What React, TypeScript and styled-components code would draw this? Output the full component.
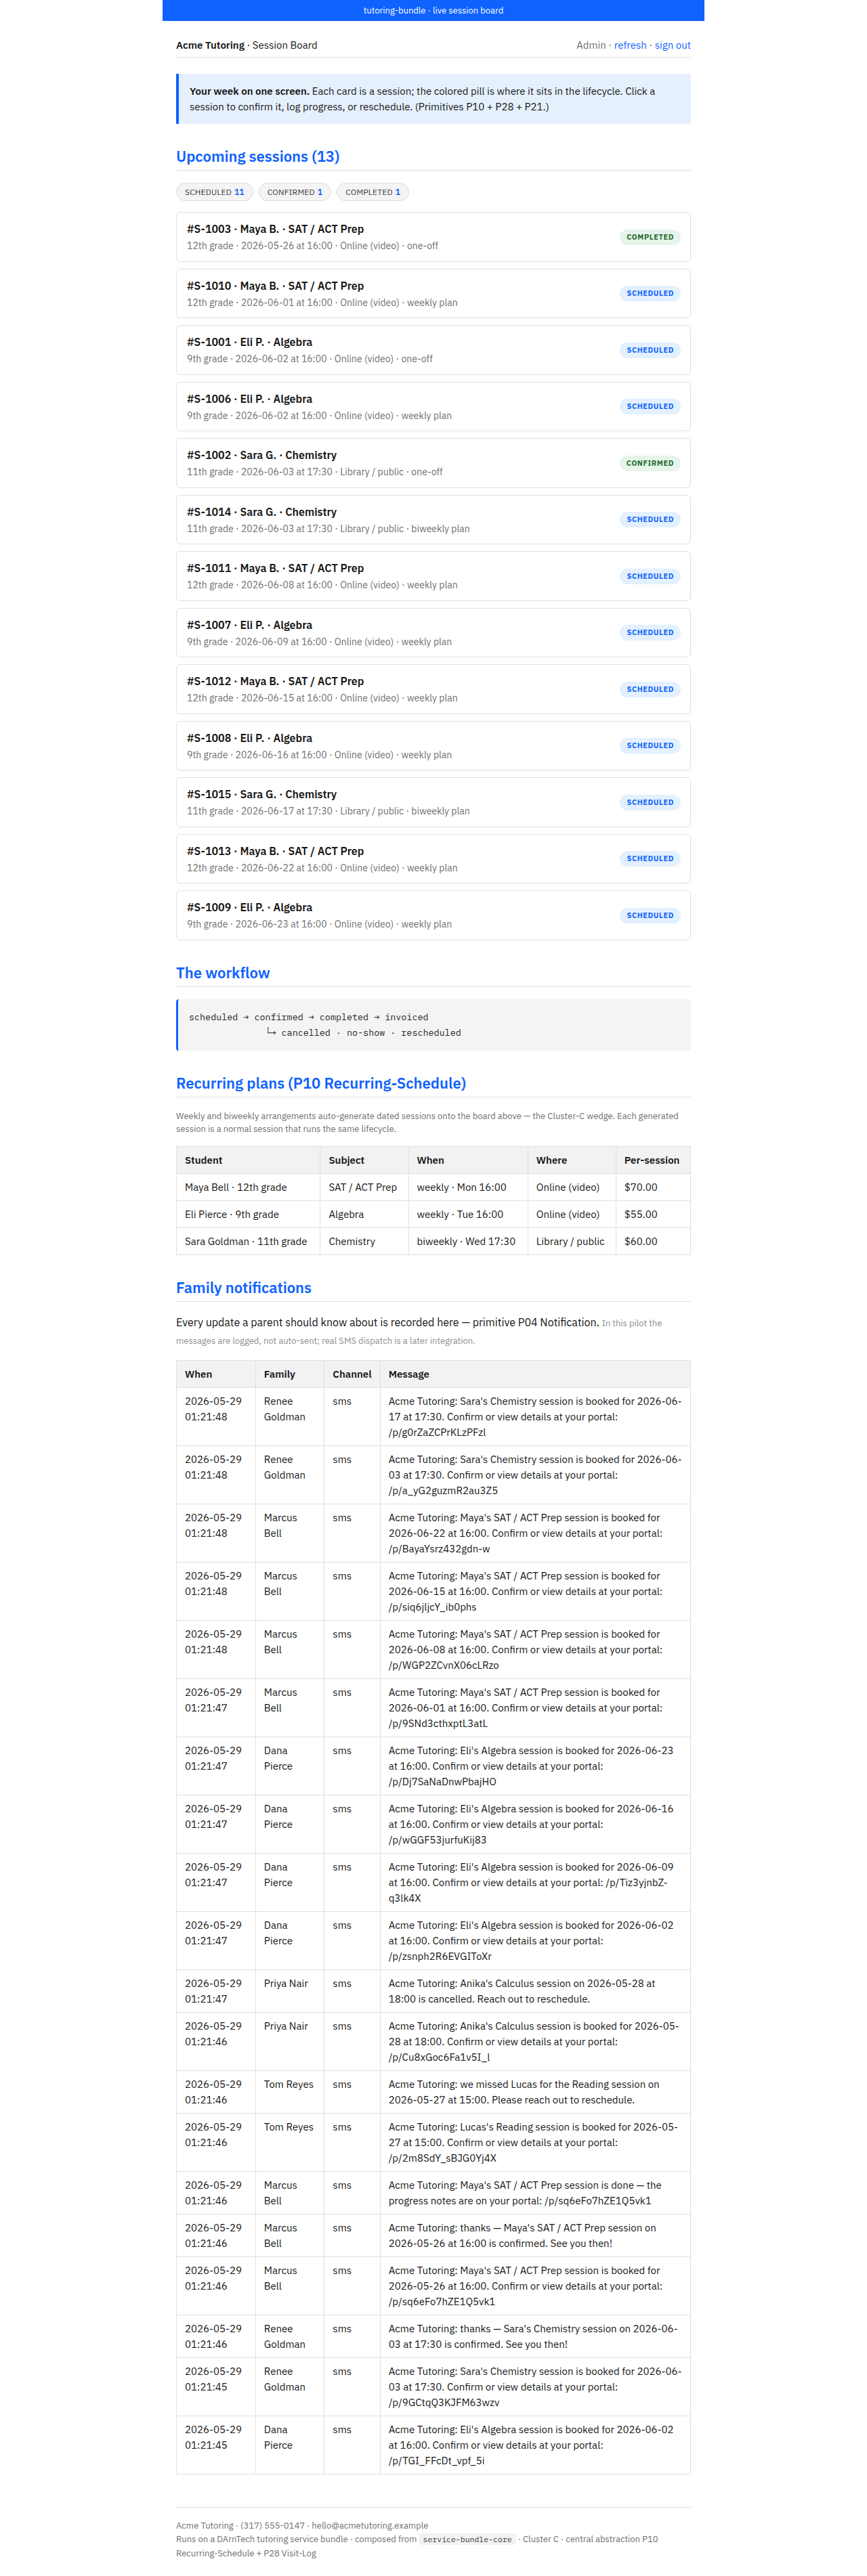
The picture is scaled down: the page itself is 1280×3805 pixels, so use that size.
import React from "react";
import styled, { createGlobalStyle } from "styled-components";

const GlobalStyle = createGlobalStyle`
  html, body { margin: 0; padding: 0; background: #ffffff; }
  body {
    font-family: "IBM Plex Sans", "Noto Sans", "Liberation Sans", sans-serif;
    color: #161616;
    font-size: 15px;
    line-height: 23px;
  }
  * { box-sizing: border-box; }
`;

const BLUE = "#0f62fe";

const Page = styled.div`
  max-width: 800px;
  margin: 0 auto;
`;

const Banner = styled.div`
  background: ${BLUE};
  color: #ffffff;
  text-align: center;
  font-size: 13px;
  height: 31px;
  line-height: 31px;
`;

const Main = styled.main`
  padding: 0 20px 17px;
`;

const TopBar = styled.header`
  display: flex;
  justify-content: space-between;
  align-items: baseline;
  padding: 24px 0 6px;
  border-bottom: 1px solid #e0e0e0;
  font-size: 15px;
`;

const Brand = styled.div`
  color: #161616;
  strong { font-weight: 600; }
`;

const Muted = styled.span`
  color: #6f6f6f;
`;

const NavLink = styled.a`
  color: ${BLUE};
  text-decoration: none;
`;

const Intro = styled.div`
  margin-top: 24px;
  background: #e5f0fc;
  border-left: 4px solid ${BLUE};
  padding: 14px 16px;
  font-size: 15px;
  line-height: 23px;
  strong { font-weight: 600; }
`;

const SectionTitle = styled.h2`
  margin: 34px 0 18px;
  padding-bottom: 6px;
  border-bottom: 1px solid #e0e0e0;
  color: ${BLUE};
  font-size: 22px;
  line-height: 28px;
  font-weight: 600;
`;

const ChipRow = styled.div`
  display: flex;
  gap: 8px;
  margin-bottom: 16px;
`;

const Chip = styled.span`
  display: inline-flex;
  align-items: center;
  gap: 4px;
  height: 27px;
  padding: 0 12px;
  border: 1px solid #dcdcdc;
  border-radius: 14px;
  background: #f4f4f4;
  font-size: 12px;
  letter-spacing: 0.2px;
  color: #393939;
  b { color: ${BLUE}; font-weight: 600; }
`;

const CardList = styled.div`
  display: flex;
  flex-direction: column;
  gap: 10px;
`;

const Card = styled.div`
  display: flex;
  align-items: center;
  justify-content: space-between;
  border: 1px solid #e0e0e0;
  border-radius: 6px;
  padding: 13px 14px 12.5px 15px;
  background: #ffffff;
`;

const CardTitle = styled.div`
  font-size: 16px;
  line-height: 22px;
  font-weight: 600;
`;

const CardMeta = styled.div`
  margin-top: 4px;
  font-size: 14px;
  line-height: 20px;
  color: #6f6f6f;
`;

type Status = "scheduled" | "confirmed" | "completed";

const pillColors: Record<Status, { bg: string; fg: string }> = {
  scheduled: { bg: "#e3f0fd", fg: BLUE },
  confirmed: { bg: "#e6f4e9", fg: "#1e6b32" },
  completed: { bg: "#e6f4e9", fg: "#1e6b32" },
};

const Pill = styled.span<{ $status: Status }>`
  display: inline-block;
  padding: 0 10px;
  height: 23px;
  line-height: 23px;
  border-radius: 12px;
  font-size: 11px;
  font-weight: 700;
  letter-spacing: 0.6px;
  text-transform: uppercase;
  background: ${(p) => pillColors[p.$status].bg};
  color: ${(p) => pillColors[p.$status].fg};
`;

const Flow = styled.pre`
  margin: 0;
  background: #f4f4f4;
  border-left: 3px solid ${BLUE};
  border-radius: 4px;
  padding: 15px 16px;
  font-family: "IBM Plex Mono", "DejaVu Sans Mono", "Liberation Mono", monospace;
  font-size: 13.4px;
  line-height: 23px;
  color: #262626;
`;

const Note = styled.p`
  margin: 0 0 16px;
  font-size: 13px;
  line-height: 19px;
  color: #6f6f6f;
`;

const Lead = styled.p`
  margin: 0 0 16px;
  font-size: 16px;
  line-height: 24px;
`;

const Small = styled.span`
  font-size: 13px;
  color: #8d8d8d;
`;

const Table = styled.table`
  width: 100%;
  border-collapse: collapse;
  font-size: 15px;
  line-height: 23px;
  th, td {
    border: 1px solid #e0e0e0;
    padding: 8px 12px;
    text-align: left;
    vertical-align: top;
  }
  th {
    background: #f2f2f2;
    font-weight: 600;
  }
`;

const Footer = styled.footer`
  margin-top: 48px;
  border-top: 1px solid #e0e0e0;
  padding-top: 17px;
  font-size: 13px;
  line-height: 20.5px;
  color: #6f6f6f;
`;

const Code = styled.code`
  font-family: "IBM Plex Mono", "DejaVu Sans Mono", "Liberation Mono", monospace;
  font-size: 11.5px;
  line-height: 16px;
  background: #f2f2f2;
  border-radius: 3px;
  padding: 1px 6px;
  color: #393939;
`;

type Session = {
  id: string;
  who: string;
  subject: string;
  grade: string;
  date: string;
  time: string;
  where: string;
  plan: string;
  status: Status;
};

const sessions: Session[] = [
  { id: "S-1003", who: "Maya B.", subject: "SAT / ACT Prep", grade: "12th grade", date: "2026-05-26", time: "16:00", where: "Online (video)", plan: "one-off", status: "completed" },
  { id: "S-1010", who: "Maya B.", subject: "SAT / ACT Prep", grade: "12th grade", date: "2026-06-01", time: "16:00", where: "Online (video)", plan: "weekly plan", status: "scheduled" },
  { id: "S-1001", who: "Eli P.", subject: "Algebra", grade: "9th grade", date: "2026-06-02", time: "16:00", where: "Online (video)", plan: "one-off", status: "scheduled" },
  { id: "S-1006", who: "Eli P.", subject: "Algebra", grade: "9th grade", date: "2026-06-02", time: "16:00", where: "Online (video)", plan: "weekly plan", status: "scheduled" },
  { id: "S-1002", who: "Sara G.", subject: "Chemistry", grade: "11th grade", date: "2026-06-03", time: "17:30", where: "Library / public", plan: "one-off", status: "confirmed" },
  { id: "S-1014", who: "Sara G.", subject: "Chemistry", grade: "11th grade", date: "2026-06-03", time: "17:30", where: "Library / public", plan: "biweekly plan", status: "scheduled" },
  { id: "S-1011", who: "Maya B.", subject: "SAT / ACT Prep", grade: "12th grade", date: "2026-06-08", time: "16:00", where: "Online (video)", plan: "weekly plan", status: "scheduled" },
  { id: "S-1007", who: "Eli P.", subject: "Algebra", grade: "9th grade", date: "2026-06-09", time: "16:00", where: "Online (video)", plan: "weekly plan", status: "scheduled" },
  { id: "S-1012", who: "Maya B.", subject: "SAT / ACT Prep", grade: "12th grade", date: "2026-06-15", time: "16:00", where: "Online (video)", plan: "weekly plan", status: "scheduled" },
  { id: "S-1008", who: "Eli P.", subject: "Algebra", grade: "9th grade", date: "2026-06-16", time: "16:00", where: "Online (video)", plan: "weekly plan", status: "scheduled" },
  { id: "S-1015", who: "Sara G.", subject: "Chemistry", grade: "11th grade", date: "2026-06-17", time: "17:30", where: "Library / public", plan: "biweekly plan", status: "scheduled" },
  { id: "S-1013", who: "Maya B.", subject: "SAT / ACT Prep", grade: "12th grade", date: "2026-06-22", time: "16:00", where: "Online (video)", plan: "weekly plan", status: "scheduled" },
  { id: "S-1009", who: "Eli P.", subject: "Algebra", grade: "9th grade", date: "2026-06-23", time: "16:00", where: "Online (video)", plan: "weekly plan", status: "scheduled" },
];

const plans = [
  { student: "Maya Bell · 12th grade", subject: "SAT / ACT Prep", when: "weekly · Mon 16:00", where: "Online (video)", price: "$70.00" },
  { student: "Eli Pierce · 9th grade", subject: "Algebra", when: "weekly · Tue 16:00", where: "Online (video)", price: "$55.00" },
  { student: "Sara Goldman · 11th grade", subject: "Chemistry", when: "biweekly · Wed 17:30", where: "Library / public", price: "$60.00" },
];

const booked = (kid: string, subj: string, date: string, time: string, token: string) =>
  `Acme Tutoring: ${kid}'s ${subj} session is booked for ${date} at ${time}. Confirm or view details at your portal: /p/${token}`;

const notes = [
  { when: "01:21:48", family: "Renee Goldman", msg: booked("Sara", "Chemistry", "2026-06-17", "17:30", "g0rZaZCPrKLzPFzl") },
  { when: "01:21:48", family: "Renee Goldman", msg: booked("Sara", "Chemistry", "2026-06-03", "17:30", "a_yG2guzmR2au3Z5") },
  { when: "01:21:48", family: "Marcus Bell", msg: booked("Maya", "SAT / ACT Prep", "2026-06-22", "16:00", "BayaYsrz432gdn-w") },
  { when: "01:21:48", family: "Marcus Bell", msg: booked("Maya", "SAT / ACT Prep", "2026-06-15", "16:00", "siq6jljcY_ib0phs") },
  { when: "01:21:48", family: "Marcus Bell", msg: booked("Maya", "SAT / ACT Prep", "2026-06-08", "16:00", "WGP2ZCvnX06cLRzo") },
  { when: "01:21:47", family: "Marcus Bell", msg: booked("Maya", "SAT / ACT Prep", "2026-06-01", "16:00", "9SNd3cthxptL3atL") },
  { when: "01:21:47", family: "Dana Pierce", msg: booked("Eli", "Algebra", "2026-06-23", "16:00", "Dj7SaNaDnwPbajHO") },
  { when: "01:21:47", family: "Dana Pierce", msg: booked("Eli", "Algebra", "2026-06-16", "16:00", "wGGF53jurfuKij83") },
  { when: "01:21:47", family: "Dana Pierce", msg: booked("Eli", "Algebra", "2026-06-09", "16:00", "Tiz3yjnbZ-q3lk4X") },
  { when: "01:21:47", family: "Dana Pierce", msg: booked("Eli", "Algebra", "2026-06-02", "16:00", "zsnph2R6EVGIToXr") },
  { when: "01:21:47", family: "Priya Nair", msg: "Acme Tutoring: Anika's Calculus session on 2026-05-28 at 18:00 is cancelled. Reach out to reschedule." },
  { when: "01:21:46", family: "Priya Nair", msg: booked("Anika", "Calculus", "2026-05-28", "18:00", "Cu8xGoc6Fa1v5I_l") },
  { when: "01:21:46", family: "Tom Reyes", msg: "Acme Tutoring: we missed Lucas for the Reading session on 2026-05-27 at 15:00. Please reach out to reschedule." },
  { when: "01:21:46", family: "Tom Reyes", msg: booked("Lucas", "Reading", "2026-05-27", "15:00", "2m8SdY_sBJG0Yj4X") },
  { when: "01:21:46", family: "Marcus Bell", msg: "Acme Tutoring: Maya's SAT / ACT Prep session is done — the progress notes are on your portal: /p/sq6eFo7hZE1Q5vk1" },
  { when: "01:21:46", family: "Marcus Bell", msg: "Acme Tutoring: thanks — Maya's SAT / ACT Prep session on 2026-05-26 at 16:00 is confirmed. See you then!" },
  { when: "01:21:46", family: "Marcus Bell", msg: booked("Maya", "SAT / ACT Prep", "2026-05-26", "16:00", "sq6eFo7hZE1Q5vk1") },
  { when: "01:21:46", family: "Renee Goldman", msg: "Acme Tutoring: thanks — Sara's Chemistry session on 2026-06-03 at 17:30 is confirmed. See you then!" },
  { when: "01:21:45", family: "Renee Goldman", msg: booked("Sara", "Chemistry", "2026-06-03", "17:30", "9GCtqQ3KJFM63wzv") },
  { when: "01:21:45", family: "Dana Pierce", msg: booked("Eli", "Algebra", "2026-06-02", "16:00", "TGI_FFcDt_vpf_5i") },
];

const counts = {
  scheduled: sessions.filter((s) => s.status === "scheduled").length,
  confirmed: sessions.filter((s) => s.status === "confirmed").length,
  completed: sessions.filter((s) => s.status === "completed").length,
};

export default function App() {
  return (
    <>
      <GlobalStyle />
      <Page>
        <Banner>tutoring-bundle · live session board</Banner>
        <Main>
          <TopBar>
            <Brand>
              <strong>Acme Tutoring</strong> · Session Board
            </Brand>
            <div>
              <Muted>Admin · </Muted>
              <NavLink href="#">refresh</NavLink>
              <Muted> · </Muted>
              <NavLink href="#">sign out</NavLink>
            </div>
          </TopBar>

          <Intro>
            <strong>Your week on one screen.</strong> Each card is a session; the colored pill is where it sits in the
            lifecycle. Click a session to confirm it, log progress, or reschedule. (Primitives P10 + P28 + P21.)
          </Intro>

          <SectionTitle>Upcoming sessions ({sessions.length})</SectionTitle>
          <ChipRow>
            <Chip>
              SCHEDULED <b>{counts.scheduled}</b>
            </Chip>
            <Chip>
              CONFIRMED <b>{counts.confirmed}</b>
            </Chip>
            <Chip>
              COMPLETED <b>{counts.completed}</b>
            </Chip>
          </ChipRow>
          <CardList>
            {sessions.map((s) => (
              <Card key={s.id}>
                <div>
                  <CardTitle>
                    #{s.id} · {s.who} · {s.subject}
                  </CardTitle>
                  <CardMeta>
                    {s.grade} · {s.date} at {s.time} · {s.where} · {s.plan}
                  </CardMeta>
                </div>
                <Pill $status={s.status}>{s.status}</Pill>
              </Card>
            ))}
          </CardList>

          <SectionTitle>The workflow</SectionTitle>
          <Flow>
            {"scheduled → confirmed → completed → invoiced\n              └→ cancelled · no-show · rescheduled"}
          </Flow>

          <SectionTitle>Recurring plans (P10 Recurring-Schedule)</SectionTitle>
          <Note>
            Weekly and biweekly arrangements auto-generate dated sessions onto the board above — the Cluster-C wedge.
            Each generated session is a normal session that runs the same lifecycle.
          </Note>
          <Table>
            <thead>
              <tr>
                <th>Student</th>
                <th>Subject</th>
                <th>When</th>
                <th>Where</th>
                <th>Per-session</th>
              </tr>
            </thead>
            <tbody>
              {plans.map((p) => (
                <tr key={p.student}>
                  <td>{p.student}</td>
                  <td>{p.subject}</td>
                  <td>{p.when}</td>
                  <td>{p.where}</td>
                  <td>{p.price}</td>
                </tr>
              ))}
            </tbody>
          </Table>

          <SectionTitle>Family notifications</SectionTitle>
          <Lead>
            Every update a parent should know about is recorded here — primitive P04 Notification.{" "}
            <Small>In this pilot the messages are logged, not auto-sent; real SMS dispatch is a later integration.</Small>
          </Lead>
          <Table>
            <thead>
              <tr>
                <th>When</th>
                <th>Family</th>
                <th>Channel</th>
                <th>Message</th>
              </tr>
            </thead>
            <tbody>
              {notes.map((n, i) => (
                <tr key={i}>
                  <td>2026-05-29 {n.when}</td>
                  <td>{n.family}</td>
                  <td>sms</td>
                  <td>{n.msg}</td>
                </tr>
              ))}
            </tbody>
          </Table>

          <Footer>
            Acme Tutoring · (317) 555-0147 · hello@acmetutoring.example
            <br />
            Runs on a DArnTech tutoring service bundle · composed from <Code>service-bundle-core</Code> · Cluster C ·
            central abstraction P10 Recurring-Schedule + P28 Visit-Log
          </Footer>
        </Main>
      </Page>
    </>
  );
}
